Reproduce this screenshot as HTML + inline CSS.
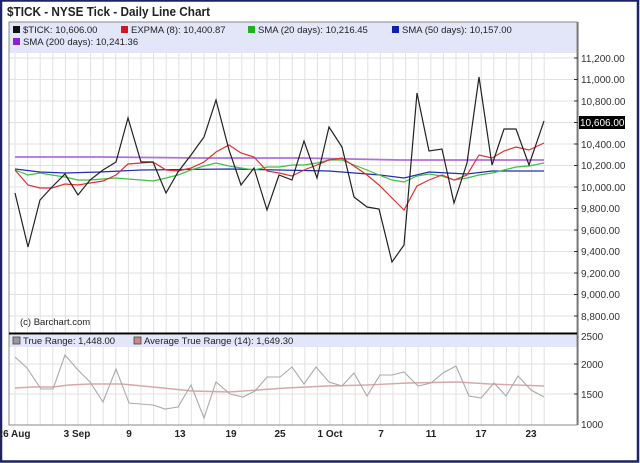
<!DOCTYPE html>
<html><head><meta charset="utf-8"><style>
html,body{margin:0;padding:0;background:#fff;}
svg{display:block;font-family:"Liberation Sans",Arial,sans-serif;}
</style></head><body>
<svg width="640" height="463" viewBox="0 0 640 463" xmlns="http://www.w3.org/2000/svg">
<rect x="0" y="0" width="640" height="463" fill="#fff"/>
<rect x="1" y="0.5" width="637" height="461" fill="none" stroke="#1c2466" stroke-width="2.5"/>
<text x="7" y="16" font-size="12.5" font-weight="bold" fill="#222" textLength="203" lengthAdjust="spacingAndGlyphs">$TICK - NYSE Tick - Daily Line Chart</text>
<rect x="9" y="22" width="568" height="31" fill="#e3e5f8"/>
<g stroke="#e2e2e2" stroke-width="1">
<path d="M15 53V425M27.6 53V425M40.2 53V425M52.8 53V425M65.4 53V425M78 53V425M90.6 53V425M103.2 53V425M115.8 53V425M128.4 53V425M141 53V425M153.6 53V425M166.2 53V425M178.8 53V425M191.4 53V425M204 53V425M216.6 53V425M229.2 53V425M241.8 53V425M254.4 53V425M267 53V425M279.6 53V425M292.2 53V425M304.8 53V425M317.4 53V425M330 53V425M342.6 53V425M355.2 53V425M367.8 53V425M380.4 53V425M393 53V425M405.6 53V425M418.2 53V425M430.8 53V425M443.4 53V425M456 53V425M468.6 53V425M481.2 53V425M493.8 53V425M506.4 53V425M519 53V425M531.6 53V425M544.2 53V425"/>
<path d="M9 58H577M9 79.5H577M9 101H577M9 122.5H577M9 144H577M9 165.5H577M9 187H577M9 208.5H577M9 230H577M9 251.5H577M9 273H577M9 294.5H577M9 316H577M9 364H577M9 394H577"/>
</g>
<rect x="9" y="335" width="568" height="12" fill="#e3e5f8"/>
<rect x="9" y="22" width="568" height="403" fill="none" stroke="#888" stroke-width="1"/>
<line x1="9" y1="333.5" x2="577" y2="333.5" stroke="#000" stroke-width="2"/>
<line x1="578" y1="22" x2="578" y2="425" stroke="#666"/>
<g font-size="9.5" fill="#222">
<rect x="13" y="26" width="7" height="7" fill="#111"/><text x="23" y="33">$TICK: 10,606.00</text>
<rect x="121" y="26" width="7" height="7" fill="#d01818"/><text x="131" y="33">EXPMA (8): 10,400.87</text>
<rect x="248" y="26" width="7" height="7" fill="#20b020"/><text x="258" y="33">SMA (20 days): 10,216.45</text>
<rect x="392" y="26" width="7" height="7" fill="#1020b0"/><text x="402" y="33">SMA (50 days): 10,157.00</text>
<rect x="13" y="38" width="7" height="7" fill="#8a20d8"/><text x="23" y="45">SMA (200 days): 10,241.36</text>
<rect x="13" y="337" width="7" height="7" fill="#999" stroke="#444" stroke-width="0.8"/><text x="23" y="344">True Range: 1,448.00</text>
<rect x="134" y="337" width="7" height="7" fill="#c88" stroke="#444" stroke-width="0.8"/><text x="144" y="344">Average True Range (14): 1,649.30</text>
<text x="20" y="325">(c) Barchart.com</text>
</g>
<g font-size="10" fill="#333">
<path d="M574 58h4M574 79.5h4M574 101h4M574 122.5h4M574 144h4M574 165.5h4M574 187h4M574 208.5h4M574 230h4M574 251.5h4M574 273h4M574 294.5h4M574 316h4M574 364h4M574 394h4" stroke="#333"/>
<text x="581" y="62">11,200.00</text>
<text x="581" y="83">11,000.00</text>
<text x="581" y="105">10,800.00</text>
<text x="581" y="148">10,400.00</text>
<text x="581" y="169">10,200.00</text>
<text x="581" y="191">10,000.00</text>
<text x="581" y="212">9,800.00</text>
<text x="581" y="234">9,600.00</text>
<text x="581" y="255">9,400.00</text>
<text x="581" y="277">9,200.00</text>
<text x="581" y="298">9,000.00</text>
<text x="581" y="320">8,800.00</text>
<text x="581" y="340">2500</text>
<text x="581" y="368">2000</text>
<text x="581" y="398">1500</text>
<text x="581" y="428">1000</text>
</g>
<rect x="579" y="116" width="46" height="13" fill="#000"/>
<text x="580" y="126" font-size="10" fill="#fff">10,606.00</text>
<polyline fill="none" stroke="#b070e0" stroke-width="1.8" points="15,157 100,157 200,158 300,158 400,160 544,160"/>
<polyline fill="none" stroke="#2030b0" stroke-width="1.2" points="15,169 40,172 65,173 100,172 141,170 229,169 329,171 380,175 404,178 429,172 467,174 492,171 544,171"/>
<polyline fill="none" stroke="#40c040" stroke-width="1.2" points="15,170 28,175 40,173 52,175 65,177 78,180 90,180 103,179 116,178 128,179 141,180 153,181 166,178 178,175 191,170 204,166 216,163 229,166 241,168 254,170 267,167 279,167 292,165 304,165 317,163 329,160 342,160 354,165 367,170 379,175 392,180 404,182 417,176 429,174 442,176 454,180 467,178 479,175 492,173 504,170 516,167 529,166 544,163"/>
<polyline fill="none" stroke="#e03030" stroke-width="1.2" points="15,170 28,185 40,188 52,188 65,184 78,185 90,183 103,181 116,175 128,164 141,163 153,162 166,170 178,171 191,168 204,162 216,152 229,145 241,153 254,157 267,171 279,173 292,176 304,170 317,165 329,160 342,158 354,166 367,175 379,185 392,198 404,210 417,186 429,180 442,175 454,180 467,175 479,155 492,158 504,151 516,147 529,150 544,143"/>
<polyline fill="none" stroke="#222" stroke-width="1.2" points="15,193 28,247 40,200 52,187 65,174 78,195 90,180 103,170 116,162 128,118 141,162 153,162 166,193 178,172 191,155 204,137 216,100 229,150 241,185 254,168 267,210 279,175 292,180 304,141 317,178 329,127 342,147 354,197 367,207 379,209 392,262 404,245 417,93 429,151 442,149 454,203 467,163 479,77 492,165 504,129 516,129 529,165 544,121"/>
<polyline fill="none" stroke="#d8a8a8" stroke-width="1.4" points="15,388 33,387 53,387 69,385 90,384 122,384 163,388 192,391 229,392 286,388 327,386 367,385 408,383 457,382 490,384 544,386"/>
<polyline fill="none" stroke="#aaa" stroke-width="1.1" points="15,357 27,368 41,389 53,389 65,355 78,370 90,382 103,402 116,369 129,403 141,404 153,405 165,409 178,407 191,385 204,418 216,382 230,394 243,397 255,391 267,377 280,377 292,367 304,384 316,367 329,382 342,386 354,373 367,396 380,375 392,375 404,372 418,386 431,383 443,373 456,366 469,396 481,398 494,383 506,396 518,376 531,390 544,397"/>
<g font-size="10" font-weight="bold" fill="#222" text-anchor="middle">
<text x="14" y="437">26 Aug</text>
<text x="77" y="437">3 Sep</text>
<text x="129" y="437">9</text>
<text x="180" y="437">13</text>
<text x="231" y="437">19</text>
<text x="280" y="437">25</text>
<text x="330" y="437">1 Oct</text>
<text x="381" y="437">7</text>
<text x="431" y="437">11</text>
<text x="481" y="437">17</text>
<text x="531" y="437">23</text>
</g>
</svg>
</body></html>
